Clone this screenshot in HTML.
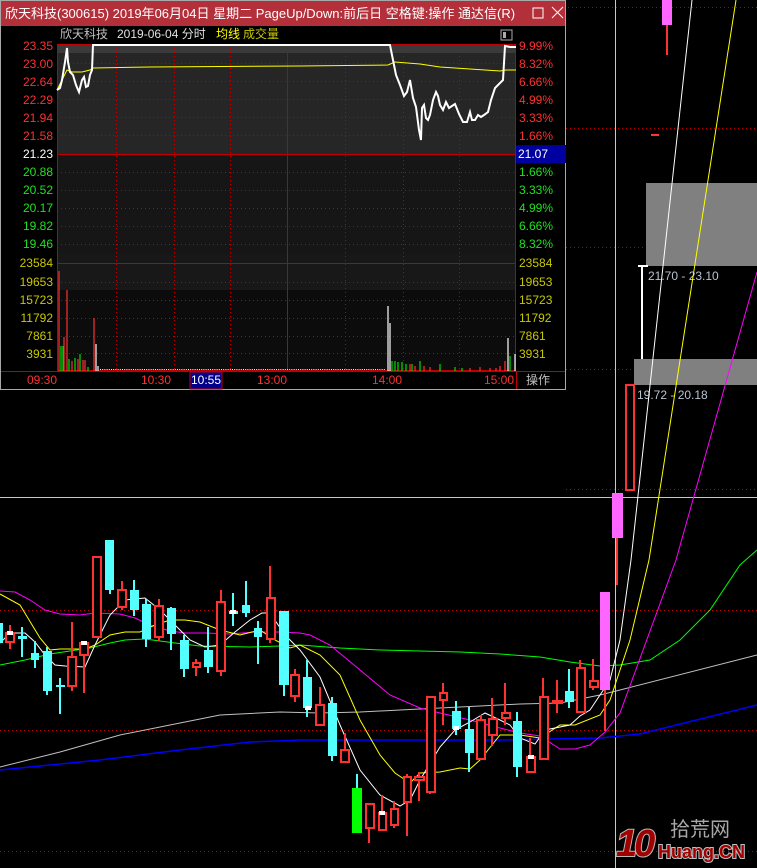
<!DOCTYPE html>
<html><head><meta charset="utf-8"><style>
html,body{margin:0;padding:0;background:#000;width:757px;height:868px;overflow:hidden}
svg{display:block}
text{font-family:"Liberation Sans","Noto Sans CJK SC",sans-serif}
</style></head><body>
<svg width="757" height="868" viewBox="0 0 757 868" xmlns="http://www.w3.org/2000/svg">
<g stroke="#c00000" stroke-dasharray="1,3" stroke-width="1">
<line x1="0" y1="7.5" x2="757" y2="7.5"/><line x1="566" y1="128.5" x2="757" y2="128.5"/><line x1="566" y1="247.5" x2="646" y2="247.5"/>
<line x1="566" y1="369.5" x2="634" y2="369.5"/><line x1="566" y1="489.5" x2="757" y2="489.5"/><line x1="0" y1="610.5" x2="757" y2="610.5"/>
<line x1="0" y1="730.5" x2="757" y2="730.5"/><line x1="0" y1="851.5" x2="757" y2="851.5"/>
</g>
<line x1="0" y1="497.5" x2="757" y2="497.5" stroke="#c8c8c8"/>
<line x1="615.5" y1="0" x2="615.5" y2="868" stroke="#c8c8c8"/>
<rect x="646" y="183" width="111" height="83" fill="#808080"/>
<rect x="634" y="359" width="123" height="26" fill="#808080"/>
<line x1="642" y1="266" x2="642" y2="359" stroke="#fff" stroke-width="2"/><line x1="638" y1="266" x2="648" y2="266" stroke="#fff" stroke-width="2"/>
<text x="648" y="280" font-size="12" fill="#b8c4d0">21.70 - 23.10</text>
<text x="637" y="399" font-size="12" fill="#b8c4d0">19.72 - 20.18</text>
<g fill="none" stroke-width="1">
<polyline stroke="#c0c0c0" points="0,767 60,752 120,735 180,723 220,715 280,712 320,713 360,712 400,710 440,708 480,706 520,704 560,703 600,695 620,690 757,655"/>
<polyline stroke="#0000ff" stroke-width="1.5" points="0,770 100,760 180,750 250,742 300,740 400,740 500,740 600,738 640,734 757,705"/>
<polyline stroke="#00ff00" points="0,665 25,660 50,654 70,651 90,648 110,643 125,640 145,639 175,643 200,646 250,647 280,646 300,645 340,648 380,650 420,651 460,652 500,654 540,657 570,662 600,666 620,665 650,660 680,640 710,610 740,565 757,550"/>
<polyline stroke="#ff00ff" points="0,591 15,592 30,600 45,610 60,614 80,615 95,613 120,614 135,618 150,625 170,631 185,633 205,633 230,634 255,632 280,632 300,633 310,635 330,645 360,670 390,695 420,708 440,713 470,720 500,728 520,733 540,736 560,749 575,749 590,745 605,732 620,713 676,560 757,272"/>
<polyline stroke="#ffff00" points="0,594 20,605 40,638 50,650 60,649 85,649 95,645 110,635 125,632 140,632 155,625 170,620 185,620 200,622 220,630 240,635 260,630 275,640 290,648 300,645 320,655 340,675 360,720 380,755 395,773 410,783 420,773 440,772 460,768 470,769 480,760 500,735 520,735 540,738 560,725 575,725 600,715 610,700 620,670 630,640 649,560 736,0"/>
<polyline stroke="#ffffff" points="0,643 10,633 25,633 35,642 45,655 55,665 65,666 85,667 95,645 110,615 125,600 145,598 160,610 175,625 190,640 205,647 220,645 235,632 250,620 262,613 270,613 285,635 300,650 320,677 340,725 360,770 380,795 400,806 410,800 420,780 440,747 455,730 470,722 485,713 500,720 510,725 520,738 535,744 545,730 570,725 580,716 590,710 600,695 610,680 620,640 631,560 692,0"/>
</g>
<g stroke-width="2">
<g stroke="#ff3232">
<line x1="10" y1="625" x2="10" y2="649"/><line x1="72" y1="622" x2="72" y2="691"/><line x1="84" y1="642" x2="84" y2="693"/>
<line x1="122" y1="581" x2="122" y2="610"/><line x1="159" y1="599" x2="159" y2="641"/><line x1="196" y1="659" x2="196" y2="676"/>
<line x1="221" y1="590" x2="221" y2="676"/><line x1="270" y1="566" x2="270" y2="643"/><line x1="295" y1="669" x2="295" y2="702"/>
<line x1="320" y1="687" x2="320" y2="725"/><line x1="345" y1="733" x2="345" y2="763"/><line x1="369" y1="804" x2="369" y2="843"/>
<line x1="382" y1="795" x2="382" y2="830"/><line x1="394" y1="801" x2="394" y2="828"/><line x1="407" y1="774" x2="407" y2="836"/>
<line x1="419" y1="772" x2="419" y2="801"/><line x1="430" y1="696" x2="430" y2="794"/><line x1="443" y1="683" x2="443" y2="725"/>
<line x1="481" y1="715" x2="481" y2="760"/><line x1="492" y1="698" x2="492" y2="746"/><line x1="505" y1="683" x2="505" y2="725"/>
<line x1="530" y1="738" x2="530" y2="772"/><line x1="543" y1="678" x2="543" y2="760"/><line x1="557" y1="680" x2="557" y2="713"/>
<line x1="580" y1="660" x2="580" y2="713"/><line x1="593" y1="659" x2="593" y2="690"/><line x1="605" y1="680" x2="605" y2="731"/>
<line x1="617" y1="530" x2="617" y2="585"/><line x1="667" y1="20" x2="667" y2="55"/>
</g>
<g stroke="#54ffff">
<line x1="22" y1="627" x2="22" y2="657"/><line x1="35" y1="641" x2="35" y2="668"/><line x1="47" y1="647" x2="47" y2="695"/>
<line x1="60" y1="678" x2="60" y2="714"/><line x1="110" y1="540" x2="110" y2="594"/><line x1="134" y1="580" x2="134" y2="616"/>
<line x1="146" y1="599" x2="146" y2="647"/><line x1="171" y1="607" x2="171" y2="650"/><line x1="184" y1="635" x2="184" y2="677"/>
<line x1="208" y1="627" x2="208" y2="673"/><line x1="233" y1="593" x2="233" y2="626"/><line x1="246" y1="581" x2="246" y2="617"/>
<line x1="258" y1="621" x2="258" y2="664"/><line x1="284" y1="611" x2="284" y2="696"/><line x1="307" y1="660" x2="307" y2="717"/>
<line x1="332" y1="697" x2="332" y2="761"/><line x1="357" y1="774" x2="357" y2="790"/><line x1="456" y1="701" x2="456" y2="735"/>
<line x1="469" y1="707" x2="469" y2="772"/><line x1="517" y1="712" x2="517" y2="777"/><line x1="569" y1="669" x2="569" y2="708"/>
</g>
</g>
<g fill="#54ffff">
<rect x="0" y="623" width="3" height="20"/><rect x="18" y="636" width="9" height="3"/><rect x="31" y="653" width="8" height="7"/>
<rect x="43" y="651" width="9" height="40"/><rect x="56" y="685" width="9" height="2"/><rect x="105" y="540" width="9" height="50"/>
<rect x="130" y="590" width="9" height="20"/><rect x="142" y="604" width="9" height="35"/><rect x="167" y="608" width="9" height="26"/>
<rect x="180" y="640" width="9" height="29"/><rect x="204" y="650" width="9" height="17"/><rect x="229" y="611" width="9" height="3"/>
<rect x="242" y="605" width="8" height="8"/><rect x="254" y="628" width="8" height="9"/><rect x="279" y="611" width="10" height="74"/>
<rect x="303" y="677" width="9" height="31"/><rect x="328" y="703" width="9" height="53"/><rect x="452" y="711" width="9" height="18"/>
<rect x="465" y="729" width="9" height="24"/><rect x="513" y="721" width="9" height="46"/><rect x="565" y="691" width="9" height="11"/>
</g>
<rect x="352" y="788" width="10" height="45" fill="#00ff00"/>
<g fill="#000" stroke="#ff3232" stroke-width="2">
<rect x="6" y="633" width="8" height="9"/><rect x="68" y="657" width="8" height="29"/><rect x="80" y="643" width="8" height="12"/>
<rect x="93" y="557" width="8" height="80"/><rect x="118" y="590" width="8" height="17"/><rect x="155" y="606" width="8" height="31"/>
<rect x="193" y="663" width="7" height="4"/><rect x="217" y="602" width="8" height="69"/><rect x="267" y="598" width="8" height="41"/>
<rect x="291" y="675" width="8" height="21"/><rect x="316" y="705" width="8" height="20"/><rect x="341" y="750" width="8" height="12"/>
<rect x="366" y="804" width="8" height="24"/><rect x="379" y="813" width="7" height="17"/><rect x="391" y="809" width="7" height="16"/>
<rect x="404" y="777" width="7" height="25"/><rect x="415" y="777" width="9" height="3"/><rect x="427" y="697" width="8" height="95"/>
<rect x="440" y="693" width="7" height="7"/><rect x="477" y="720" width="8" height="39"/><rect x="489" y="719" width="8" height="16"/>
<rect x="502" y="713" width="8" height="5"/><rect x="527" y="757" width="8" height="15"/><rect x="540" y="697" width="8" height="62"/>
<rect x="553" y="701" width="9" height="2"/><rect x="577" y="668" width="8" height="44"/><rect x="590" y="681" width="8" height="6"/>
<rect x="626" y="385" width="8" height="105"/>
</g>
<g fill="#fff"><rect x="7" y="631" width="6" height="4"/><rect x="81" y="641" width="6" height="4"/><rect x="230" y="610" width="6" height="4"/><rect x="305" y="706" width="6" height="4"/><rect x="379" y="811" width="6" height="4"/><rect x="453" y="726" width="6" height="4"/><rect x="528" y="755" width="6" height="4"/></g>
<rect x="651" y="134" width="8" height="2" fill="#ff3232"/>
<g fill="#ff66ff"><rect x="600" y="592" width="10" height="98"/><rect x="612" y="493" width="11" height="45"/><rect x="662" y="0" width="10" height="25"/></g>

<!-- logo -->
<text x="616" y="856" font-size="38" font-weight="bold" fill="#a00000" stroke="#b8b8b8" stroke-width="2" paint-order="stroke" font-style="italic" letter-spacing="-3">10</text>
<text x="670" y="836" font-size="20" fill="#a8a8a8">拾荒网</text>
<text x="658" y="858" font-size="18" font-weight="bold" fill="#a00000" stroke="#c0c0c0" stroke-width="2" paint-order="stroke">Huang.CN</text>

<!-- popup window -->
<rect x="0.5" y="0.5" width="565" height="389" fill="#000" stroke="#a8a8a8"/>
<rect x="1" y="1" width="564" height="25" fill="#b3303a"/>
<text x="5" y="18" font-size="13" fill="#fff">欣天科技(300615) 2019年06月04日 星期二 PageUp/Down:前后日 空格键:操作 通达信(R)</text>
<rect x="533" y="8" width="10" height="10" fill="none" stroke="#fff"/>
<path d="M552 7 L563 18 M563 7 L552 18" stroke="#fff"/>
<text x="60" y="38" font-size="12" fill="#c0c0c0">欣天科技</text>
<text x="117" y="38" font-size="12" fill="#e0e0e0">2019-06-04 分时</text>
<text x="216" y="38" font-size="12" fill="#ffff00">均线</text>
<text x="243" y="38" font-size="12" fill="#c8c800">成交量</text>
<rect x="501" y="30" width="11" height="10" fill="none" stroke="#aaa"/><rect x="503" y="32" width="3" height="6" fill="#aaa"/>
<rect x="57" y="44" width="459" height="110" fill="#262626"/>
<rect x="57" y="44" width="459" height="9" fill="#3a3a3a"/>
<rect x="57" y="154" width="459" height="100" fill="#161616"/>
<rect x="57" y="254" width="459" height="36" fill="#181818"/>
<rect x="57" y="290" width="459" height="81" fill="#0c0c0c"/>
<g stroke="#c00000" stroke-dasharray="1,3">
<line x1="57" y1="63.5" x2="516" y2="63.5"/><line x1="57" y1="81.5" x2="516" y2="81.5"/><line x1="57" y1="99.5" x2="516" y2="99.5"/><line x1="57" y1="117.5" x2="516" y2="117.5"/><line x1="57" y1="135.5" x2="516" y2="135.5"/>
<line x1="57" y1="172.5" x2="516" y2="172.5"/><line x1="57" y1="190.5" x2="516" y2="190.5"/><line x1="57" y1="208.5" x2="516" y2="208.5"/><line x1="57" y1="226.5" x2="516" y2="226.5"/><line x1="57" y1="244.5" x2="516" y2="244.5"/>
<line x1="57" y1="282.5" x2="516" y2="282.5"/><line x1="57" y1="300.5" x2="516" y2="300.5"/><line x1="57" y1="318.5" x2="516" y2="318.5"/><line x1="57" y1="336.5" x2="516" y2="336.5"/><line x1="57" y1="353.5" x2="516" y2="353.5"/>
<line x1="116.5" y1="44" x2="116.5" y2="371"/><line x1="174.5" y1="44" x2="174.5" y2="371"/><line x1="230.5" y1="44" x2="230.5" y2="371"/><line x1="345.5" y1="44" x2="345.5" y2="371"/><line x1="403.5" y1="44" x2="403.5" y2="371"/><line x1="459.5" y1="44" x2="459.5" y2="371"/>
</g>
<g stroke="#c00000" fill="none">
<rect x="57.5" y="44.5" width="458" height="326"/>
<line x1="57" y1="154.5" x2="516" y2="154.5"/><line x1="57" y1="263.5" x2="516" y2="263.5"/>
<line x1="287.5" y1="44" x2="287.5" y2="371"/>
<line x1="1" y1="371.5" x2="565" y2="371.5"/><line x1="516.5" y1="371" x2="516.5" y2="389"/>
</g>
<line x1="100" y1="369.5" x2="386" y2="369.5" stroke="#fff" stroke-dasharray="1,1.2"/>
<g stroke-width="1.2">
<g stroke="#ff3030"><line x1="59" y1="371" x2="59" y2="271"/><line x1="64" y1="371" x2="64" y2="337"/><line x1="67" y1="371" x2="67" y2="290"/><line x1="72" y1="371" x2="72" y2="361"/><line x1="78" y1="371" x2="78" y2="359"/><line x1="83" y1="371" x2="83" y2="360"/><line x1="85" y1="371" x2="85" y2="360"/><line x1="94" y1="371" x2="94" y2="318"/>
<line x1="410" y1="371" x2="410" y2="364"/><line x1="415" y1="371" x2="415" y2="366"/><line x1="424" y1="371" x2="424" y2="366"/><line x1="430" y1="371" x2="430" y2="367"/><line x1="440" y1="371" x2="440" y2="368"/><line x1="470" y1="371" x2="470" y2="368"/><line x1="480" y1="371" x2="480" y2="367"/><line x1="490" y1="371" x2="490" y2="368"/><line x1="496" y1="371" x2="496" y2="368"/><line x1="500" y1="371" x2="500" y2="366"/><line x1="505" y1="371" x2="505" y2="361"/></g>
<g stroke="#00e000"><line x1="61" y1="371" x2="61" y2="346"/><line x1="63" y1="371" x2="63" y2="346"/><line x1="69" y1="371" x2="69" y2="359"/><line x1="75" y1="371" x2="75" y2="358"/><line x1="80" y1="371" x2="80" y2="354"/><line x1="88" y1="371" x2="88" y2="367"/>
<line x1="392" y1="371" x2="392" y2="361"/><line x1="395" y1="371" x2="395" y2="361"/><line x1="398" y1="371" x2="398" y2="362"/><line x1="402" y1="371" x2="402" y2="362"/><line x1="406" y1="371" x2="406" y2="364"/><line x1="412" y1="371" x2="412" y2="364"/><line x1="420" y1="371" x2="420" y2="361"/><line x1="440" y1="371" x2="440" y2="364"/><line x1="455" y1="371" x2="455" y2="367"/><line x1="462" y1="371" x2="462" y2="368"/><line x1="510" y1="371" x2="510" y2="356"/></g>
<g stroke="#fff"><line x1="96" y1="371" x2="96" y2="344"/><line x1="98" y1="371" x2="98" y2="366"/><line x1="388" y1="371" x2="388" y2="306"/><line x1="390" y1="371" x2="390" y2="323"/><line x1="508" y1="371" x2="508" y2="338"/><line x1="515" y1="371" x2="515" y2="354"/></g>
</g>
<polyline fill="none" stroke="#ffff00" stroke-width="1" points="57,90 62,80 67,70 72,72 82,72 90,70 93,68 150,67 300,66 388,65 395,62 420,64 440,67 470,69 500,71 506,70 516,70"/>
<polyline fill="none" stroke="#fff" stroke-width="2" points="57,90 60,88 62,80 65,62 67,48 68,62 70,72 73,75 76,85 79,92 82,80 84,77 86,87 88,86 90,75 92,70 93,45 390,45 393,60 396,75 400,85 404,96 407,92 410,80 413,98 416,107 419,130 421,140 422,108 424,105 426,118 428,120 430,115 433,100 436,92 438,96 440,105 443,110 446,102 449,108 452,106 455,104 459,114 463,122 467,122 470,112 472,120 475,120 478,115 481,117 484,115 488,112 491,100 495,88 503,80 505,46 510,47 516,47"/>
<g font-size="12" text-anchor="end">
<g fill="#ff3030"><text x="53" y="50">23.35</text><text x="53" y="68">23.00</text><text x="53" y="86">22.64</text><text x="53" y="104">22.29</text><text x="53" y="122">21.94</text><text x="53" y="140">21.58</text></g>
<text x="53" y="158" fill="#fff">21.23</text>
<g fill="#20e020"><text x="53" y="176">20.88</text><text x="53" y="194">20.52</text><text x="53" y="212">20.17</text><text x="53" y="230">19.82</text><text x="53" y="248">19.46</text></g>
<g fill="#c8c800"><text x="53" y="267">23584</text><text x="53" y="286">19653</text><text x="53" y="304">15723</text><text x="53" y="322">11792</text><text x="53" y="340">7861</text><text x="53" y="358">3931</text></g>
</g>
<g font-size="12">
<g fill="#ff3030"><text x="519" y="50">9.99%</text><text x="519" y="68">8.32%</text><text x="519" y="86">6.66%</text><text x="519" y="104">4.99%</text><text x="519" y="122">3.33%</text><text x="519" y="140">1.66%</text></g>
<rect x="516" y="145" width="50" height="18" fill="#0000a0"/><text x="518" y="158" fill="#fff">21.07</text>
<g fill="#20e020"><text x="519" y="176">1.66%</text><text x="519" y="194">3.33%</text><text x="519" y="212">4.99%</text><text x="519" y="230">6.66%</text><text x="519" y="248">8.32%</text></g>
<g fill="#c8c800"><text x="519" y="267">23584</text><text x="519" y="286">19653</text><text x="519" y="304">15723</text><text x="519" y="322">11792</text><text x="519" y="340">7861</text><text x="519" y="358">3931</text></g>
<g fill="#ff3030" text-anchor="middle"><text x="42" y="384">09:30</text><text x="156" y="384">10:30</text><text x="272" y="384">13:00</text><text x="387" y="384">14:00</text><text x="499" y="384">15:00</text></g>
<rect x="190" y="372" width="32" height="17" fill="#00008c" stroke="#c00000"/>
<text x="206" y="384" fill="#fff" text-anchor="middle">10:55</text>
<text x="538" y="384" fill="#c0c0c0" text-anchor="middle">操作</text>
</g>
</svg>
</body></html>
